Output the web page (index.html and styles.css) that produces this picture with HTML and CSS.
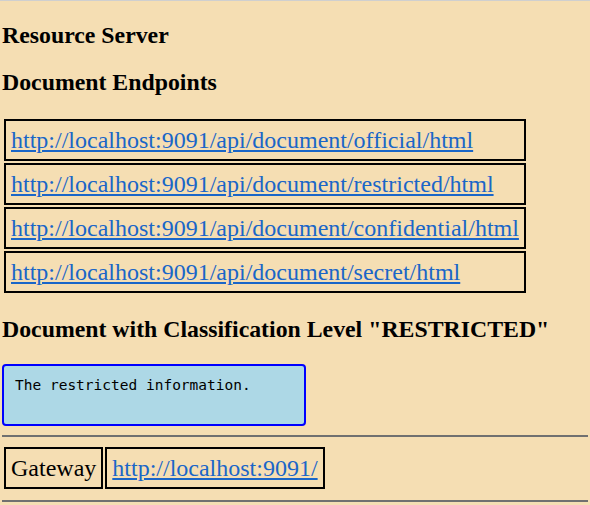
FILE: index.html
```html
<!DOCTYPE html>
<html>
<head>
<meta charset="utf-8">
<title>Resource Server</title>
<link rel="stylesheet" href="styles.css">
</head>
<body>
<h3 class="heading">Resource Server</h3>
<h3 class="heading">Document Endpoints</h3>
<table class="links">
  <tr><td><a href="#">http://localhost:9091/api/document/official/html</a></td></tr>
  <tr><td><a href="#">http://localhost:9091/api/document/restricted/html</a></td></tr>
  <tr><td><a href="#">http://localhost:9091/api/document/confidential/html</a></td></tr>
  <tr><td><a href="#">http://localhost:9091/api/document/secret/html</a></td></tr>
</table>
<h3 class="heading">Document with Classification Level "RESTRICTED"</h3>
<div class="doc">The restricted information.</div>
<hr class="rule">
<table class="links">
  <tr><td>Gateway</td><td><a href="#">http://localhost:9091/</a></td></tr>
</table>
<hr class="rule">
</body>
</html>
```
FILE: styles.css
```css
html {
  background: #f5deb3;
  border-top: 1px solid #cfcfcf;
}
body {
  margin: 0;
  padding: 0 2px;
  font-family: "Liberation Serif", "Times New Roman", serif;
  color: #000;
}
.heading {
  font-size: 23.8px;
  font-weight: bold;
  margin: 22px 0;
  line-height: 25px;
}
.links {
  border-collapse: separate;
  border-spacing: 2px;
  font-size: 24px;
}
.links td {
  border: 2px solid #000;
  padding: 5px;
  line-height: 28px;
}
.links a {
  color: #1a66c8;
  text-decoration: underline;
}
.doc {
  box-sizing: border-box;
  width: 304px;
  height: 62px;
  background: #add8e6;
  border: 2px solid #0000ff;
  border-radius: 4px;
  padding: 11px 11px 10px;
  font-family: "DejaVu Sans Mono", monospace;
  font-size: 14.5px;
  line-height: 17px;
  white-space: pre;
}
.rule {
  border: none;
  border-top: 2px solid #707070;
  margin: 9px 0 8px;
}
```
